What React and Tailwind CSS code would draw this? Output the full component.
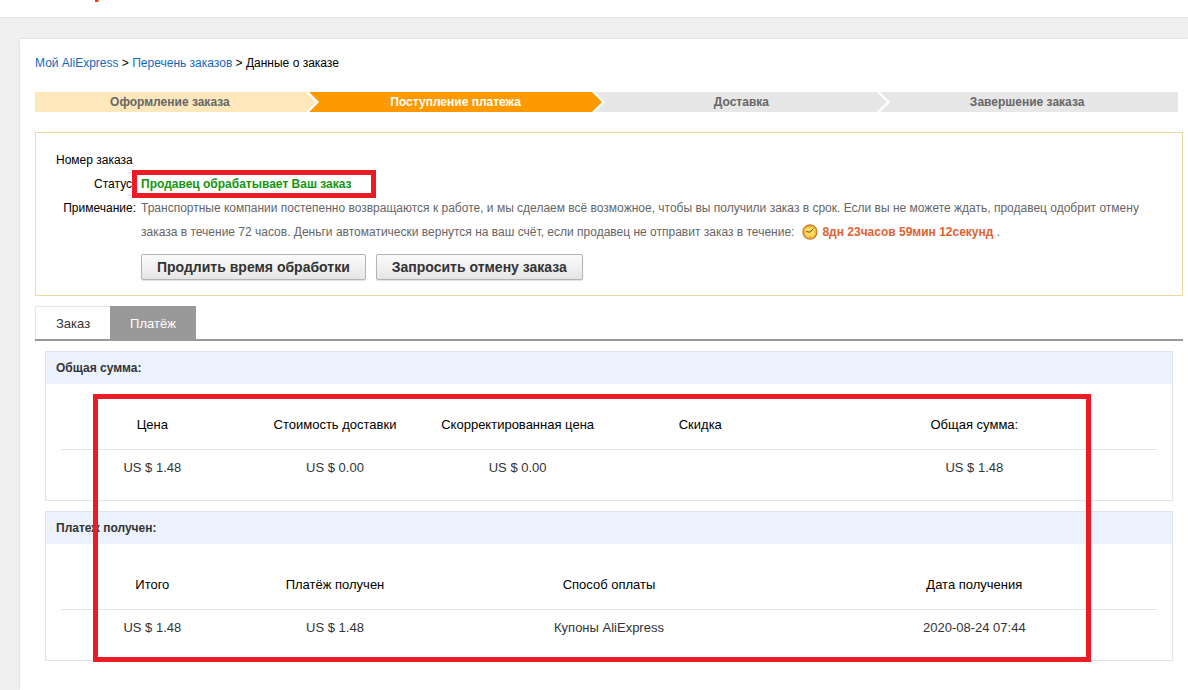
const steps = [
  { label: 'Оформление заказа', tone: 'text-[#666]', bg: 'bg-[#fee8bb]', fill: '#fee8bb' },
  { label: 'Поступление платежа', tone: 'text-white', bg: 'bg-[#ff9900]', fill: '#ff9900' },
  { label: 'Доставка', tone: 'text-[#666]', bg: 'bg-[#e7e7e7]', fill: '#e7e7e7' },
  { label: 'Завершение заказа', tone: 'text-[#666]', bg: 'bg-[#e7e7e7]', fill: '#e7e7e7' },
];

function Steps() {
  return (
    <ol className="mr-[5px] grid grid-cols-4 text-xs font-bold">
      {steps.map((step, i) => (
        <li key={step.label} className={`relative flex h-5 items-center justify-center ${step.bg} ${step.tone}`}>
          {i > 0 && (
            <svg className="absolute top-0 left-[-16px] h-5 w-[17px]" viewBox="0 0 17 20" aria-hidden="true">
              <path d="M0 0H17V20H0Z" fill={steps[i - 1].fill} />
              <path d="M1 0H17V20H1L11 10Z" fill="#fff" />
              <path d="M4 0H17V20H4L14 10Z" fill={step.fill} />
            </svg>
          )}
          <span className="pr-4">{step.label}</span>
        </li>
      ))}
    </ol>
  );
}

function ClockIcon() {
  return (
    <svg className="mr-1 ml-2 inline-block size-4 align-[-4px]" viewBox="0 0 16 16" aria-hidden="true">
      <circle cx="8" cy="8" r="7" fill="#fbd04a" stroke="#c98230" strokeWidth="1.4" />
      <circle cx="8" cy="8" r="5.6" fill="#fdda5e" stroke="#f3b437" strokeWidth="0.8" />
      <path d="M4.5 7.5L7.5 8.2L11.3 5" fill="none" stroke="#5f4520" strokeWidth="1" />
      <path d="M8 2.8V3.8M8 12.2V13.2M2.8 8H3.6M12.4 8H13.2" stroke="#b07a2a" strokeWidth="0.8" />
    </svg>
  );
}

function ActionButton({ children }) {
  return (
    <button
      type="button"
      className="h-[26px] rounded-[2px] border border-[#b3b3b3] bg-linear-to-b from-[#fbfbfb] to-[#e6e6e6] px-[15px] text-sm leading-6 font-bold text-[#333] shadow-[0_1px_1px_rgba(0,0,0,0.12)]"
    >
      {children}
    </button>
  );
}

function Panel({ title, columns, row }) {
  return (
    <section className="border border-[#dfe3ee]">
      <h2 className="bg-[#ebf2fe] px-[10px] text-xs leading-8 font-bold text-[#333]">{title}</h2>
      <div className="px-[15px] pt-4 pb-[14px]">
        <table className="w-full table-fixed text-[13px]">
          <colgroup>
            {columns.map((c) => (
              <col key={c.label} className={c.width} />
            ))}
          </colgroup>
          <thead>
            <tr className="h-[49px] border-b border-[#e3e3e3]">
              {columns.map((c) => (
                <th key={c.label} scope="col" className="p-0 text-center font-normal text-black">
                  {c.label}
                </th>
              ))}
            </tr>
          </thead>
          <tbody>
            <tr className="h-[37px]">
              {row.map((v, i) => (
                <td key={i} className="p-0 text-center text-[#333]">
                  {v}
                </td>
              ))}
            </tr>
          </tbody>
        </table>
      </div>
    </section>
  );
}

export default function App() {
  return (
    <div className="min-h-screen overflow-x-hidden bg-[#f0f0f0] font-['Liberation_Sans',Arial,sans-serif] text-xs text-black">
      <header className="flex h-[18px] items-start border-b border-[#e6e6e6] bg-white pl-[95px]">
        <svg className="h-0.5 w-1" viewBox="0 0 4 2" aria-hidden="true">
          <path d="M0 0H4L3 2H0Z" fill="#e4431b" />
        </svg>
      </header>

      <main className="mt-[21px] ml-5 min-h-[651px] bg-white pt-4 pr-[5px] pl-[15px] shadow-[0_0_2px_rgba(0,0,0,0.15)]">
        <nav className="leading-4" aria-label="Навигация">
          <a href="#my" className="text-[#1369c0]">Мой AliExpress</a>
          {' > '}
          <a href="#orders" className="text-[#1369c0]">Перечень заказов</a>
          {' > '}
          <span>Данные о заказе</span>
        </nav>

        <div className="mt-[21px]">
          <Steps />
        </div>

        <section className="mt-5 border border-[#ead9a0] px-5 py-[15px] leading-6">
          <dl className="grid grid-cols-[80px_1fr]">
            <dt className="pr-1 text-right whitespace-nowrap">Номер заказа</dt>
            <dd />
            <dt className="pr-1 text-right">Статус</dt>
            <dd className="relative pl-[5px] font-bold text-[#13960f]">
              Продавец обрабатывает Ваш заказ
              <span className="pointer-events-none absolute top-[-2px] left-[-4px] h-7 w-[244px] border-5 border-[#ed1c24]" />
            </dd>
            <dt className="text-right">Примечание:</dt>
            <dd className="pr-5 pl-[5px] text-[#666]">
              Транспортные компании постепенно возвращаются к работе, и мы сделаем всё возможное, чтобы вы получили заказ в срок. Если вы не можете ждать, продавец одобрит отмену заказа в течение 72 часов. Деньги автоматически вернутся на ваш счёт, если продавец не отправит заказ в течение:
              <ClockIcon />
              <b className="text-[#e1622f]">8дн 23часов 59мин 12секунд</b> .
            </dd>
          </dl>
          <div className="mt-[10px] flex gap-[10px] pl-[85px]">
            <ActionButton>Продлить время обработки</ActionButton>
            <ActionButton>Запросить отмену заказа</ActionButton>
          </div>
        </section>

        <div role="tablist" className="mt-[10px] flex border-b-2 border-[#999] text-[13px]">
          <button type="button" role="tab" aria-selected="false" className="h-[33px] border-t border-l border-[#e6e6e6] px-5 pt-0.5 text-[#333]">
            Заказ
          </button>
          <button type="button" role="tab" aria-selected="true" className="h-[33px] border-t border-[#999] bg-[#999] px-5 pt-0.5 text-white">
            Платёж
          </button>
        </div>

        <div className="relative mt-[10px] flex flex-col gap-[10px] px-[10px]">
          <Panel
            title="Общая сумма:"
            columns={[
              { label: 'Цена', width: 'w-1/6' },
              { label: 'Стоимость доставки', width: 'w-1/6' },
              { label: 'Скорректированная цена', width: 'w-1/6' },
              { label: 'Скидка', width: 'w-1/6' },
              { label: 'Общая сумма:', width: 'w-1/3' },
            ]}
            row={['US $ 1.48', 'US $ 0.00', 'US $ 0.00', '', 'US $ 1.48']}
          />
          <Panel
            title="Платеж получен:"
            columns={[
              { label: 'Итого', width: 'w-1/6' },
              { label: 'Платёж получен', width: 'w-1/6' },
              { label: 'Способ оплаты', width: 'w-1/3' },
              { label: 'Дата получения', width: 'w-1/3' },
            ]}
            row={['US $ 1.48', 'US $ 1.48', 'Купоны AliExpress', '2020-08-24 07:44']}
          />
          <div className="pointer-events-none absolute top-[43px] right-[92px] -bottom-px left-[58px] border-5 border-[#ed1c24]" />
        </div>
      </main>
    </div>
  );
}
